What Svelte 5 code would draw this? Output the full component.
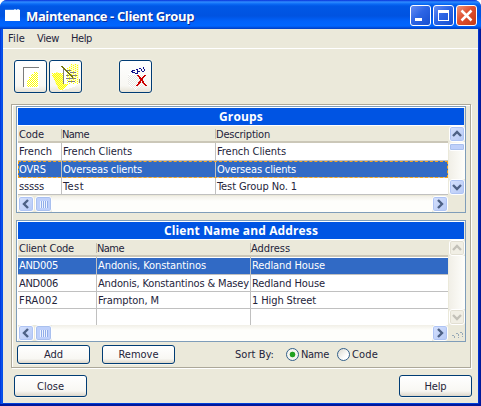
<script>
  const groups = [
    [['French', 33], ['French Clients', 69], ['French Clients', 69]],
    [['OVRS', 27], ['Overseas clients', 79], ['Overseas clients', 79]],
    [['sssss', 25], ['Test', 21], ['Test Group No. 1', 80]],
  ];
  const clients = [
    [['AND005', 39], ['Andonis, Konstantinos', 108], ['Redland House', 73]],
    [['AND006', 39], ['Andonis, Konstantinos & Masey', 151], ['Redland House', 73]],
    [['FRA002', 39], ['Frampton, M', 61], ['1 High Street', 64]],
    [['', 0], ['', 0], ['', 0]],
  ];

  // Builds a dithered area from horizontal spans: [y, x1, x2].
  function dither(spans, step = 2) {
    let d = '';
    for (const [y, a, b] of spans) {
      for (let x = a; x <= b; x++) {
        if ((step === 2 && (x + y) % 2 === 0) || (step === 4 && (x + 2 * (y % 2)) % 4 === 0)) d += `M${x} ${y}h1v1h-1z`;
      }
    }
    return d;
  }
  const range = (from, to, f) => Array.from({ length: to - from + 1 }, (_, i) => f(from + i));
  const sheet = dither(range(10, 24, (y) => [y, y < 12 ? 18 : y < 15 ? 15 : y < 18 ? 13 : 11, 21]));
  const folded = dither(range(11, 27, (y) => [y, Math.max(1, Math.round(1 + (y - 13) * 0.5)), y < 22 ? 12 : 17 - (y - 22)]));
  const backing = dither(range(2, 21, (y) => [y, y < 5 ? 20 : 16, 27]), 4);
  const bin = dither(range(13, 27, (y) => [y, y < 23 ? 7 : 7 + (y - 22), y < 23 ? 22 : 22 - (y - 22)]));

  // Tunes the tracking so that a label occupies its design width.
  function fit(node, width) {
    const n = node.textContent.length;
    if (!n || !width) return;
    const natural = node.getBoundingClientRect().width;
    node.style.letterSpacing = `${(width - natural) / n}px`;
  }
</script>

{#snippet label(text, width)}<span class="label" use:fit={width}>{text}</span>{/snippet}

{#snippet arrow(dir, off)}
  <div class="sbtn" class:off>
    <svg width="14" height="14" viewBox="0 0 14 14" fill="none" stroke={off ? '#c3c1b8' : '#4d6185'} stroke-width="2.4">
      {#if dir === 'up'}<path d="M3 9 7 5l4 4" />
      {:else if dir === 'down'}<path d="M3 5l4 4 4-4" />
      {:else if dir === 'left'}<path d="M9 3 5 7l4 4" />
      {:else}<path d="M5 3l4 4-4 4" />{/if}
    </svg>
  </div>
{/snippet}

{#snippet grid(title, titleWidth, heads, rows, selected, kind)}
  <div class="grid {kind}">
    <div class="caption">{@render label(title, titleWidth)}</div>
    <div class="upper">
      <div class="table">
        <div class="head">
          {#each heads as h, i}<div class="cell c{i}">{@render label(h[0], h[1])}</div>{/each}
        </div>
        {#each rows as row, r}
          <div class="row" class:sel={r === selected}>
            {#each row as c, i}<div class="cell c{i}">{@render label(c[0], c[1])}</div>{/each}
          </div>
        {/each}
      </div>
      <div class="vbar">
        {@render arrow('up', kind === 'clients')}
        <div class="vtrack">{#if kind === 'groups'}<div class="vthumb"></div>{/if}</div>
        {@render arrow('down', kind === 'clients')}
      </div>
    </div>
    <div class="lower">
      {@render arrow('left', false)}
      <div class="hthumb"><i></i><i></i><i></i><i></i></div>
      <div class="htrack"></div>
      {@render arrow('right', false)}
      <div class="corner">
        {#if kind === 'clients'}
          <svg width="17" height="15" viewBox="0 0 17 15" shape-rendering="crispEdges" fill="none" stroke="#9aabb8">
            <path d="M4 10.500h2M6.500 11v3M8 8.500h2M10.500 9v4M12 7.500h2M14.500 8v4" stroke-dasharray="2 1" />
          </svg>
        {/if}
      </div>
    </div>
  </div>
{/snippet}

<div class="window">
  <div class="titlebar">
    <svg class="app" width="16" height="16" viewBox="0 0 16 16" shape-rendering="crispEdges">
      <path fill="#fff" d="M0 3h15v11H0z" /><path fill="#347be4" d="M0 2h15v1H0z" /><path fill="#a8c9f5" d="M9 2h2v1H9zM12 2h2v1h-2z" />
    </svg>
    <div class="title">{@render label('Maintenance - Client Group', 168)}</div>
    <div class="controls">
      <div class="ctl"><svg width="19" height="19"><path fill="#fff" d="M4 12h7v3H4z" /></svg></div>
      <div class="ctl"><svg width="19" height="19" shape-rendering="crispEdges"><path fill="#fff" fill-rule="evenodd" d="M4 4h11v11H4zM5 7v7h9V7z" /></svg></div>
      <div class="ctl close"><svg width="19" height="19"><path d="M4.500 4.500l10 10m0-10l-10 10" stroke="#fff" stroke-width="2.500" /></svg></div>
    </div>
  </div>
  <div class="body">
    <div class="menu">{@render label('File', 17)}{@render label('View', 22)}{@render label('Help', 21)}</div>
    <div class="toolbar">
      <div class="tool">
        <svg width="29" height="29" viewBox="0 0 29 29" shape-rendering="crispEdges">
          <path fill="#fff" d="M8 6h15v20H8z" />
          <path fill="none" stroke="#7c7c7c" d="M7.500 25V5.500H23" />
          <path fill="#ff0" d={sheet} />
        </svg>
      </div>
      <div class="tool second">
        <svg width="29" height="29" viewBox="0 0 29 29" shape-rendering="crispEdges">
          <path fill="#fff" d="M0 11 11 3h18v18l-6 4-14 4z" />
          <path fill="#ffff8c" d="M1 13l5-3 6 3v9h6l-7 6H8z" />
          <path fill="#ffffd2" d="M20 2h8v19h-4l-8-3V8z" />
          <path fill="#ff0" d={folded} />
          <path fill="#ff0" d={backing} />
          <path fill="none" stroke="#808080" d="M12.500 5v17M15 8.500h5M19 10.500h6M15 13.500h3M21 13.500h5M15 16.500h10M17 19.500h7M28.500 17v4" />
          <path fill="none" stroke="#77770a" stroke-width="1.400" d="M11 4l11 12" />
        </svg>
      </div>
      <div class="tool third">
        <svg width="29" height="29" viewBox="0 0 29 29" shape-rendering="crispEdges">
          <path fill="#fff" d="M7 12h17l-2 12-8 4-6-4z" />
          <path fill="#e9e8e4" d={bin} />
          <path fill="#10108c" d="M11 8h3v1h-3zM10 9h2v1h-2zM11 10h3v1h-3zM15 7h2v1h-2zM16 8h1v3h-1zM14 11h3v1h-3zM18 6h2v1h-2zM17 9h2v1h-2zM20 7h1v2h-1zM22 5h1v2h-1zM21 9h2v1h-2zM23 7h1v2h-1z" />
          <path fill="none" stroke="#c00" stroke-width="1.700" d="M17 13l8 11M24 13l-8 11" />
        </svg>
      </div>
    </div>
    <div class="panel">
      {@render grid('Groups', 44, [['Code', 25], ['Name', 27], ['Description', 54]], groups, 1, 'groups')}
      {@render grid('Client Name and Address', 154, [['Client Code', 55], ['Name', 27], ['Address', 39]], clients, 0, 'clients')}
      <div class="actions">
        <div class="btn">{@render label('Add', 19)}</div>
        <div class="btn remove">{@render label('Remove', 40)}</div>
        <div class="sort">{@render label('Sort By:', 39)}</div>
        <div class="radio on"></div><div class="opt">{@render label('Name', 28)}</div>
        <div class="radio"></div><div class="opt">{@render label('Code', 26)}</div>
      </div>
    </div>
    <div class="footer">
      <div class="btn">{@render label('Close', 27)}</div>
      <div class="btn">{@render label('Help', 22)}</div>
    </div>
  </div>
</div>

<style>
  :global(body) { background: #fff; }
  * { box-sizing: border-box; }
  .window { width: 481px; height: 406px; display: flex; flex-direction: column; overflow: hidden; background: linear-gradient(90deg, #0030d8, #0b5cf0 2px, #0042de 3px, #0042de 478px, #0024b8 479px, #001590); border-bottom: 2px solid #00189c; border-radius: 7px 7px 0 0; font: 11px/16px "DejaVu Sans Condensed", "DejaVu Sans", sans-serif; color: #24243a; }
  .label { display: inline-block; white-space: pre; }
  svg { display: block; }
  .titlebar { height: 29px; flex: none; display: flex; padding: 0 4px 0 5px; background: linear-gradient(#0831d9 0, #2f8cff 2px, #0a6af5 4px, #0058e6 6px, #0053e1 16px, #0061fa 21px, #0066ff 26px, #0048d5 28px, #003fc0 29px); }
  .app { margin-top: 7px; }
  .title { margin-left: 5px; flex: 1; padding-top: 7px; color: #fff; font: bold 13px/18px "Open Sans", sans-serif; text-shadow: 1px 1px 0 #0b2c93; }
  .controls { display: flex; gap: 2px; padding-top: 5px; }
  .ctl { width: 21px; height: 21px; border: 1px solid #fff; border-radius: 3px; background: linear-gradient(135deg, #668cf2, #2d65e5 45%, #164fd0); }
  .ctl.close { background: linear-gradient(135deg, #f09478, #df5030 45%, #c43a16); }
  .body { flex: 1; margin: 0 3px; background: #ebe9da; display: flex; flex-direction: column; border-bottom: 1px solid #0040d8; }
  .menu { height: 20px; flex: none; border-bottom: 1px solid #fff; display: flex; gap: 12px; padding: 2px 0 0 5px; }
  .toolbar { display: flex; padding: 11px 0 0 11px; height: 55px; flex: none; }
  .tool { width: 33px; height: 33px; border: 1px solid #003c74; border-radius: 3px; background: linear-gradient(#fff, #f8f7f3 80%, #e7e3d7); padding: 1px; box-shadow: 0 0 0 1px #f0eee2; }
  .second { margin-left: 2px; }
  .third { margin-left: 37px; }
  .panel { margin: 0 7px 0 8px; height: 264px; flex: none; border: 1px solid #aca899; box-shadow: inset 1px 1px #fff, 1px 1px #fff; padding: 1px 3px 0 4px; }
  .grid { width: 450px; border: 1px solid #7f9db9; box-shadow: inset 1px 1px #fff; padding: 1px 0 0 1px; display: flex; flex-direction: column; background: #ebe9da; }
  .groups { height: 107px; }
  .clients { height: 122px; margin-top: 7px; }
  .caption { height: 17px; flex: none; background: #0054e3; color: #fff; text-align: center; font: bold 12px/17px "Open Sans", sans-serif; margin-right: 1px; box-shadow: 0 1px #fff; }
  .upper { display: flex; margin-top: 1px; }
  .table { width: 430px; background: #fff; }
  .head { height: 17px; background: #ebe9da; display: flex; border-bottom: 2px solid #cbc7b8; line-height: 18px; }
  .head .cell + .cell { background: linear-gradient(#c5c2b2, #c5c2b2) 0 3px / 1px 10px no-repeat; padding-left: 1px; }
  .row { height: 17px; display: flex; border-bottom: 1px solid #c0c0c0; line-height: 17px; }
  .row .cell + .cell { border-left: 1px solid #c0c0c0; padding-left: 1px; }
  .row:nth-child(2) { height: 18px; box-shadow: inset 0 1px #fff; line-height: 18px; }
  .clients .row:last-child { height: 16px; border-bottom: 0; }
  .cell { padding-left: 1px; overflow: visible; white-space: nowrap; }
  .groups .c0 { width: 43px; }
  .groups .c1 { width: 154px; }
  .clients .c0 { width: 78px; }
  .clients .c1 { width: 154px; }
  .c2 { flex: 1; }
  .sel { background: #316ac5; color: #fff; }
  .groups .sel { outline: 1px dashed #f5a51c; outline-offset: -1px; }
  .vbar { width: 17px; display: flex; flex-direction: column; padding: 0 0 0 1px; }
  .vtrack { flex: 1; background: linear-gradient(90deg, #f1efe7, #fefefb); padding-top: 1px; }
  .vthumb { height: 8px; border: 1px solid #fff; border-radius: 2px; background: #bfd0fa; box-shadow: inset 0 0 0 1px #a9c0ee; }
  .sbtn { width: 16px; height: 16px; flex: none; border: 1px solid #fff; border-radius: 3px; background: linear-gradient(135deg, #d5e1fd, #b6c9f6); box-shadow: inset 0 0 0 1px #afc4f4; }
  .sbtn.off { background: #f1efe5; box-shadow: inset 0 0 0 1px #e2dfd2; }
  .lower { display: flex; margin-top: auto; height: 16px; }
  .hthumb { width: 17px; height: 16px; margin-left: 1px; border: 1px solid #fff; border-radius: 3px; background: #bed0fb; box-shadow: inset 0 0 0 1px #a9c0ee; display: flex; gap: 1px; justify-content: center; align-items: center; }
  .hthumb i { width: 1px; height: 7px; background: #eef4fe; box-shadow: 1px 0 #91aeea; }
  .htrack { flex: 1; background: linear-gradient(#f1efe7, #fefefb 5px); }
  .corner { width: 17px; }
  .actions { display: flex; padding: 3px 0 0 1px; }
  .btn { width: 73px; height: 19px; border: 1px solid #003c74; border-radius: 3px; background: linear-gradient(#fff, #f8f7f3 75%, #dcd7cb); text-align: center; line-height: 18px; box-shadow: 0 1px #f7f5ec; }
  .remove { margin-left: 12px; }
  .sort { margin-left: 60px; width: 39px; line-height: 20px; }
  .radio { width: 13px; height: 13px; margin: 3px 2px 0 12px; border: 1px solid #33608b; border-radius: 50%; background: linear-gradient(135deg, #dcdad0, #fff 70%); }
  .opt { line-height: 20px; }
  .opt + .radio { margin-left: 8px; }
  .on { background: radial-gradient(circle, #21a121 0 2.500px, #f5f5f0 3.200px); }
  .footer { display: flex; justify-content: space-between; padding: 7px 6px 0 11px; }
  .footer .btn { height: 22px; line-height: 21px; }
</style>
